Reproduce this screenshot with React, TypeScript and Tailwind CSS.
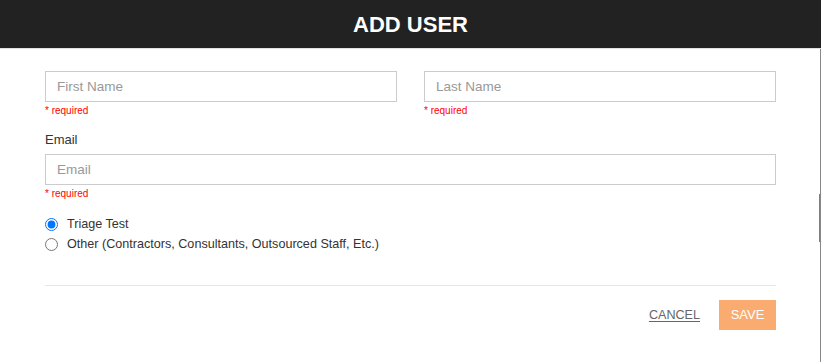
const FONT = "font-['Liberation_Sans',Arial,sans-serif]";

function Field({ placeholder, className = "" }: { placeholder: string; className?: string }) {
  return (
    <div className={className}>
      <input
        type="text"
        placeholder={placeholder}
        className="block h-[31px] w-full border border-[#cccccc] bg-white px-[11px] text-[13.5px] text-[#333] outline-none placeholder:text-[#999]"
      />
      <p className="mt-[3px] text-[10px] leading-[12px] text-[#ff0000]">* required</p>
    </div>
  );
}

function Radio({ label, checked }: { label: string; checked?: boolean }) {
  return (
    <label className="flex h-[20px] items-center">
      <input
        type="radio"
        name="userType"
        defaultChecked={checked}
        className="m-0 h-[13px] w-[13px] accent-[#0075ff]"
      />
      <span className="ml-[9px] text-[12.6px] text-[#333]">{label}</span>
    </label>
  );
}

export default function App() {
  return (
    <div className={`${FONT} h-[362px] w-[821px] overflow-hidden bg-white`}>
      <header className="flex h-12 items-center justify-center bg-[#222222]">
        <h1 className="text-[22px] font-bold text-white">ADD USER</h1>
      </header>

      <div className="flex h-[314px] border-t border-[#e0e0e0]">
        <div className="flex-1 pl-[45px] pr-[43px] pt-[22px]">
          <div className="flex gap-[27px]">
            <Field placeholder="First Name" className="flex-1" />
            <Field placeholder="Last Name" className="flex-1" />
          </div>

          <p className="mt-[15px] text-[13px] font-medium leading-[16px] text-[#333]">Email</p>
          <Field placeholder="Email" className="mt-[6px]" />

          <div className="mt-[14px]">
            <Radio label="Triage Test" checked />
            <Radio label="Other (Contractors, Consultants, Outsourced Staff, Etc.)" />
          </div>

          <div className="mt-[31px] border-t border-[#e5e5e5]" />

          <div className="mt-[14px] flex items-center justify-end gap-[19px]">
            <button className="text-[12.6px] text-[#666] underline underline-offset-2">CANCEL</button>
            <button className="h-[30px] w-[57px] bg-[#f9ab70] text-[13px] text-white">SAVE</button>
          </div>
        </div>
        <div className="flex w-[2px] flex-col border-r border-[#888]">
          <div className="mt-[145px] h-[48px] bg-[#b0704a]" />
        </div>
      </div>
    </div>
  );
}
